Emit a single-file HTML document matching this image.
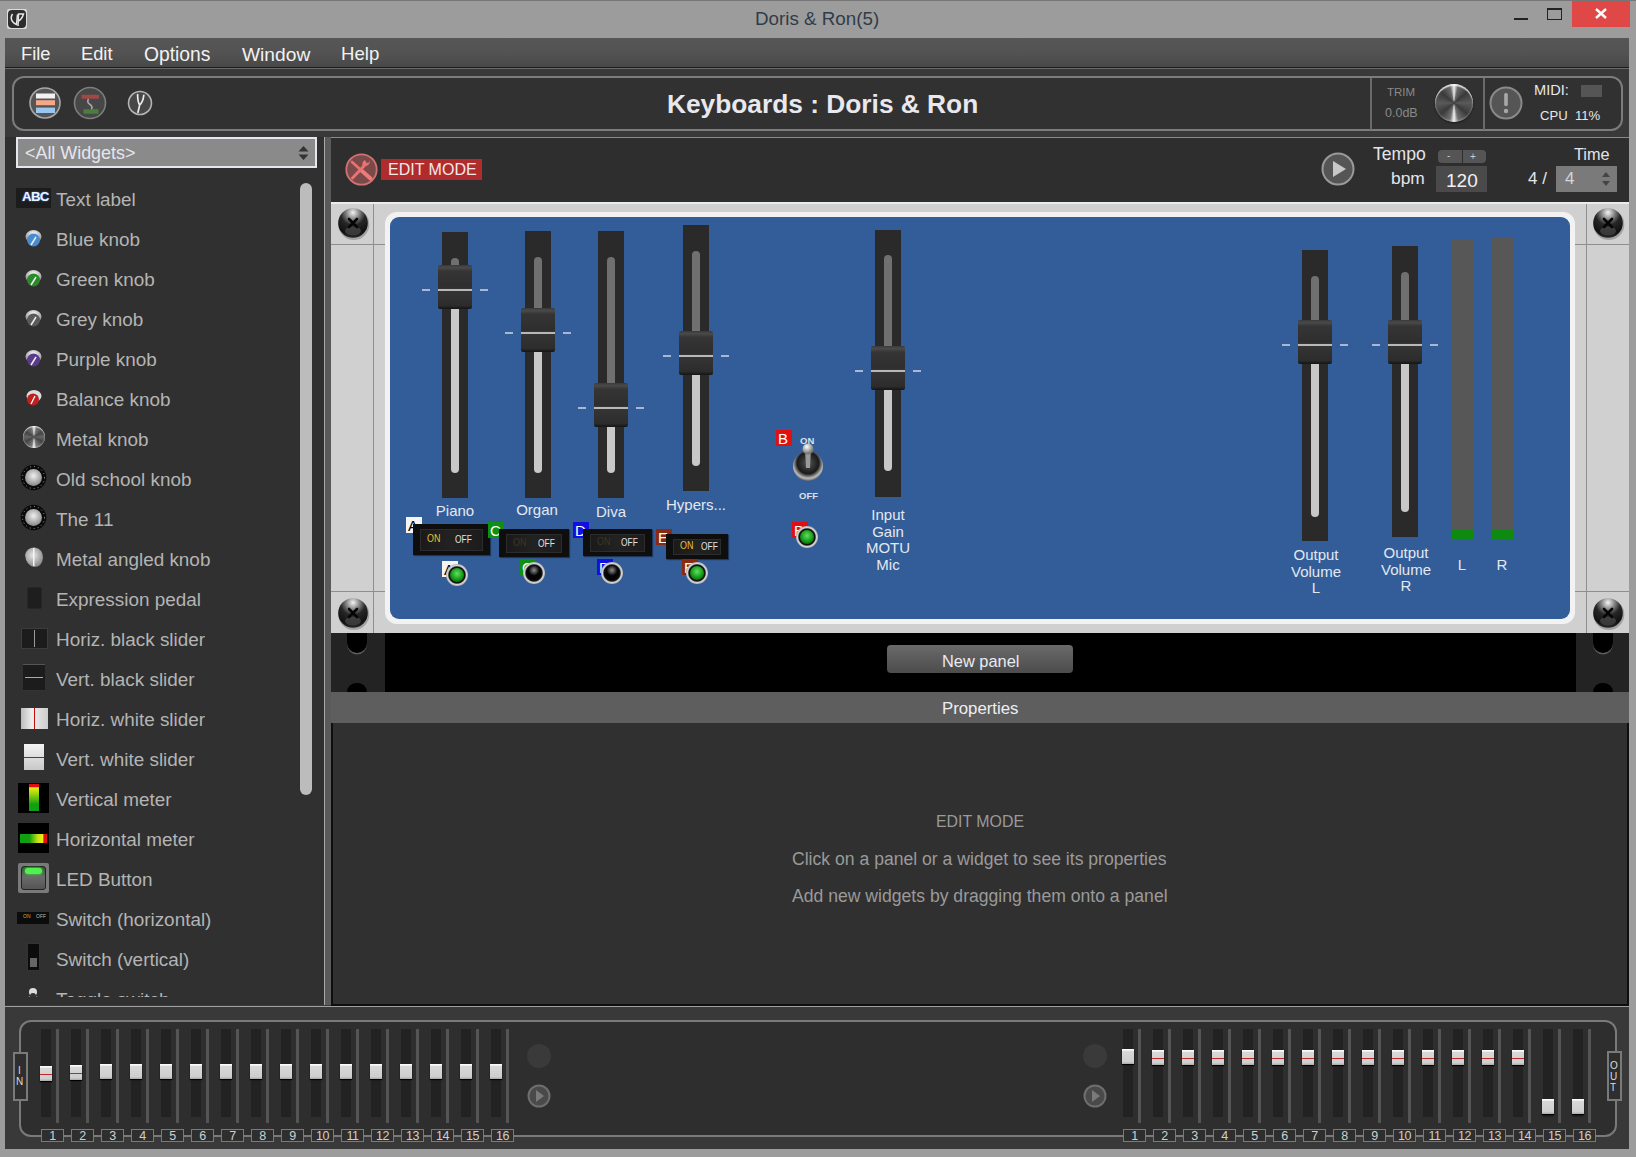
<!DOCTYPE html>
<html><head><meta charset="utf-8">
<style>
*{margin:0;padding:0;box-sizing:border-box}
html,body{width:1636px;height:1157px;overflow:hidden;background:#9c9c9c;font-family:"Liberation Sans",sans-serif}
.a{position:absolute}
.t{position:absolute;white-space:nowrap;line-height:1}
svg{position:absolute;overflow:visible}
</style></head><body>
<div class="a" style="left:0px;top:0px;width:1636px;height:1px;background:#767676"></div>
<div class="a" style="left:7px;top:9px;width:20px;height:20px;background:#dcdcdc;border-radius:2px"></div>
<div class="a" style="left:8px;top:10px;width:18px;height:18px;background:#2e2e2e;border-radius:4px"></div>
<svg style="left:8px;top:10px" width="18" height="18"><path d="M4.5 4 Q2 8 4.5 11.5 Q6.5 14 8.5 14.5 L9.5 4.5" stroke="#e8e8e8" stroke-width="1.5" fill="none"/><path d="M10 16 L10.5 4 L15.5 4 Q14 9 10.5 11" stroke="#e8e8e8" stroke-width="1.5" fill="none"/></svg>
<div class="t" style="left:755px;top:10px;font-size:18.8px;color:#303c48;">Doris &amp; Ron(5)</div>
<div class="a" style="left:1514px;top:18px;width:14px;height:2px;background:#222"></div>
<div class="a" style="left:1547px;top:8px;width:15px;height:12px;border:1px solid #222;border-top-width:2px"></div>
<div class="a" style="left:1572px;top:1px;width:58px;height:26px;background:#e04848"></div>
<svg style="left:1572px;top:1px" width="58" height="26"><path d="M24 8 L34 17 M34 8 L24 17" stroke="#fff" stroke-width="2.4"/></svg>
<div class="a" style="left:5px;top:38px;width:1624px;height:1111px;background:#2e2e2e"></div>
<div class="a" style="left:5px;top:38px;width:1624px;height:29px;background:linear-gradient(#565656,#535353 50%,#484848)"></div>
<div class="a" style="left:5px;top:67px;width:1624px;height:2px;background:#1c1c1c"></div>
<div class="t" style="left:21px;top:45px;font-size:18.3px;color:#f2f2f2;">File</div>
<div class="t" style="left:81px;top:45px;font-size:18.3px;color:#f2f2f2;">Edit</div>
<div class="t" style="left:144px;top:45px;font-size:19.3px;color:#f2f2f2;">Options</div>
<div class="t" style="left:242px;top:45px;font-size:19.2px;color:#f2f2f2;">Window</div>
<div class="t" style="left:341px;top:45px;font-size:18.6px;color:#f2f2f2;">Help</div>
<div class="a" style="left:5px;top:69px;width:1624px;height:68px;background:#393939"></div>
<div class="a" style="left:5px;top:68px;width:1624px;height:1px;background:#6a6a6a"></div>
<div class="a" style="left:12px;top:76px;width:1611px;height:55px;border:2px solid #7c7c7c;border-radius:12px;background:#313131"></div>
<div class="t" style="left:667px;top:91px;font-size:26.3px;color:#e8e8ee;font-weight:bold">Keyboards : Doris &amp; Ron</div>
<div class="a" style="left:1370px;top:78px;width:2px;height:52px;background:#6a6a6a"></div>
<div class="a" style="left:1483px;top:78px;width:2px;height:52px;background:#6a6a6a"></div>
<div class="t" style="left:1387px;top:87px;font-size:11.5px;color:#8a8a8a;">TRIM</div>
<div class="t" style="left:1385px;top:107px;font-size:12.5px;color:#8a8a8a;">0.0dB</div>
<div class="t" style="left:1534px;top:83px;font-size:14.6px;color:#e8e8e8;">MIDI:</div>
<div class="a" style="left:1581px;top:85px;width:21px;height:12px;background:#555"></div>
<div class="t" style="left:1540px;top:109px;font-size:13.1px;color:#e8e8e8;">CPU&nbsp;&nbsp;11%</div>
<div class="a" style="left:331px;top:137px;width:1298px;height:2px;background:#8a8a8a"></div>
<svg style="left:28px;top:86px" width="34" height="34"><circle cx="17" cy="17" r="15" fill="#555" stroke="#a8a8a8" stroke-width="1.6"/><rect x="8" y="7.5" width="19" height="5" fill="#f2f2f2"/><rect x="8" y="14.2" width="19" height="5" fill="#f4a888"/><rect x="8" y="21.6" width="19" height="5.4" fill="#98c8f0"/></svg>
<svg style="left:73px;top:86px" width="34" height="34"><circle cx="17" cy="17" r="15.5" fill="#474747" stroke="#7e7e7e" stroke-width="1.6"/><path d="M8.5 9 Q10 8.2 11.5 9 Q13 8.2 14.5 9 Q16 8.2 17.5 9 Q19 8.2 20.5 9 Q22 8.2 23.5 9 Q25 8.2 26 9 L26 12.5 Q24.5 13.3 23 12.5 Q21.5 13.3 20 12.5 Q18.5 13.3 17 12.5 Q15.5 13.3 14 12.5 Q12.5 13.3 11 12.5 Q9.5 13.3 8.5 12.5Z" fill="#a04848"/><path d="M15.5 13 Q13.5 16.5 17 18.5 Q20 20.5 18.5 23.5" stroke="#a8a8a8" stroke-width="1.6" fill="none"/><path d="M10.5 23.5 Q12 22.7 13.5 23.5 Q15 22.7 16.5 23.5 Q18 22.7 19.5 23.5 Q21 22.7 22.5 23.5 Q24 22.7 25.5 23.5 L25.5 27.5 Q24 28.3 22.5 27.5 Q21 28.3 19.5 27.5 Q18 28.3 16.5 27.5 Q15 28.3 13.5 27.5 Q12 28.3 10.5 27.5Z" fill="#4a7e3e"/></svg>
<svg style="left:126px;top:89px" width="28" height="28"><circle cx="14" cy="14" r="11.5" fill="#474747" stroke="#b4b4b4" stroke-width="1.6"/><path d="M11.6 5.5 Q11.6 13 13.7 15.9 Q17 13 17.8 6.4 M13.7 15.9 L12 23.3" stroke="#ececec" stroke-width="1.7" fill="none" stroke-linecap="round"/></svg>
<div class="a" style="left:1435px;top:84px;width:38px;height:38px;border-radius:50%;background:conic-gradient(#f0f0f0 0deg,#6a6a6a 14deg,#3a3a3a 50deg,#5a5a5a 90deg,#3a3a3a 130deg,#707070 166deg,#f4f4f4 180deg,#707070 194deg,#3a3a3a 230deg,#5a5a5a 270deg,#3a3a3a 310deg,#6a6a6a 346deg,#f0f0f0 360deg);box-shadow:inset 0 2px 1px rgba(255,255,255,.75),inset 0 -1px 2px rgba(255,255,255,.3),0 1px 2px rgba(0,0,0,.5)"></div>
<svg style="left:1489px;top:86px" width="34" height="34"><circle cx="17" cy="17" r="15.5" fill="#555" stroke="#8a8a8a" stroke-width="2"/><rect x="15.2" y="7" width="3.6" height="13" rx="1.5" fill="#a8a8a8"/><circle cx="17" cy="25" r="2.2" fill="#a8a8a8"/></svg>
<div class="a" style="left:6px;top:138px;width:318px;height:867px;background:#303030"></div>
<div class="a" style="left:324px;top:137px;width:7px;height:869px;background:#5a5a5a;border-left:1px solid #a8a8a8"></div>
<div class="a" style="left:16px;top:137px;width:301px;height:31px;border:2px solid #e6e6ee;background:#8a8a8a"></div>
<div class="t" style="left:25px;top:145px;font-size:17.9px;color:#e6e6ee;">&lt;All Widgets&gt;</div>
<svg style="left:298px;top:145px" width="12" height="16"><path d="M0.5 6.5 L5.5 1 L10.5 6.5Z M0.5 9.5 L5.5 15 L10.5 9.5Z" fill="#333"/></svg>
<div class="a" style="left:300px;top:183px;width:12px;height:612px;background:#bcbcbc;border-radius:6px"></div>
<div class="a" style="left:6px;top:138px;width:294px;height:859px;overflow:hidden">
<div class="t" style="left:50px;top:53px;font-size:18.9px;color:#b4b4b4;">Text label</div>
<div class="t" style="left:50px;top:93px;font-size:18.9px;color:#b4b4b4;">Blue knob</div>
<div class="t" style="left:50px;top:133px;font-size:18.9px;color:#b4b4b4;">Green knob</div>
<div class="t" style="left:50px;top:173px;font-size:18.9px;color:#b4b4b4;">Grey knob</div>
<div class="t" style="left:50px;top:213px;font-size:18.9px;color:#b4b4b4;">Purple knob</div>
<div class="t" style="left:50px;top:253px;font-size:18.9px;color:#b4b4b4;">Balance knob</div>
<div class="t" style="left:50px;top:293px;font-size:18.9px;color:#b4b4b4;">Metal knob</div>
<div class="t" style="left:50px;top:333px;font-size:18.9px;color:#b4b4b4;">Old school knob</div>
<div class="t" style="left:50px;top:373px;font-size:18.9px;color:#b4b4b4;">The 11</div>
<div class="t" style="left:50px;top:413px;font-size:18.9px;color:#b4b4b4;">Metal angled knob</div>
<div class="t" style="left:50px;top:453px;font-size:18.9px;color:#b4b4b4;">Expression pedal</div>
<div class="t" style="left:50px;top:493px;font-size:18.9px;color:#b4b4b4;">Horiz. black slider</div>
<div class="t" style="left:50px;top:533px;font-size:18.9px;color:#b4b4b4;">Vert. black slider</div>
<div class="t" style="left:50px;top:573px;font-size:18.9px;color:#b4b4b4;">Horiz. white slider</div>
<div class="t" style="left:50px;top:613px;font-size:18.9px;color:#b4b4b4;">Vert. white slider</div>
<div class="t" style="left:50px;top:653px;font-size:18.9px;color:#b4b4b4;">Vertical meter</div>
<div class="t" style="left:50px;top:693px;font-size:18.9px;color:#b4b4b4;">Horizontal meter</div>
<div class="t" style="left:50px;top:733px;font-size:18.9px;color:#b4b4b4;">LED Button</div>
<div class="t" style="left:50px;top:773px;font-size:18.9px;color:#b4b4b4;">Switch (horizontal)</div>
<div class="t" style="left:50px;top:813px;font-size:18.9px;color:#b4b4b4;">Switch (vertical)</div>
<div class="t" style="left:50px;top:853px;font-size:18.9px;color:#b4b4b4;">Toggle switch</div>
</div>
<div class="a" style="left:16px;top:188px;width:35px;height:20px;background:#1c1c1c"></div>
<div class="t" style="left:22px;top:190px;font-size:13.2px;color:#eef2ff;font-weight:bold;text-shadow:0 0 2px #3a70d0,0 0 1px #3a70d0;letter-spacing:-0.6px">ABC</div>
<svg style="left:24px;top:229px" width="20" height="20"><defs><radialGradient id="kg0" cx="50%" cy="30%" r="60%"><stop offset="0" stop-color="#fafafa"/><stop offset="1" stop-color="#9a9a9a"/></radialGradient></defs><ellipse cx="9.5" cy="7.5" rx="8" ry="6.5" fill="url(#kg0)"/><circle cx="9.5" cy="11" r="6.5" fill="#4a8ad0"/><path d="M7 16 L12 8" stroke="#eee" stroke-width="1.5"/></svg>
<svg style="left:24px;top:269px" width="20" height="20"><defs><radialGradient id="kg1" cx="50%" cy="30%" r="60%"><stop offset="0" stop-color="#fafafa"/><stop offset="1" stop-color="#9a9a9a"/></radialGradient></defs><ellipse cx="9.5" cy="7.5" rx="8" ry="6.5" fill="url(#kg1)"/><circle cx="9.5" cy="11" r="6.5" fill="#2a8a2a"/><path d="M7 16 L12 8" stroke="#eee" stroke-width="1.5"/></svg>
<svg style="left:24px;top:309px" width="20" height="20"><defs><radialGradient id="kg2" cx="50%" cy="30%" r="60%"><stop offset="0" stop-color="#fafafa"/><stop offset="1" stop-color="#9a9a9a"/></radialGradient></defs><ellipse cx="9.5" cy="7.5" rx="8" ry="6.5" fill="url(#kg2)"/><circle cx="9.5" cy="11" r="6.5" fill="#5a5a5a"/><path d="M7 16 L12 8" stroke="#eee" stroke-width="1.5"/></svg>
<svg style="left:24px;top:349px" width="20" height="20"><defs><radialGradient id="kg3" cx="50%" cy="30%" r="60%"><stop offset="0" stop-color="#fafafa"/><stop offset="1" stop-color="#9a9a9a"/></radialGradient></defs><ellipse cx="9.5" cy="7.5" rx="8" ry="6.5" fill="url(#kg3)"/><circle cx="9.5" cy="11" r="6.5" fill="#5a3a8a"/><path d="M7 16 L12 8" stroke="#eee" stroke-width="1.5"/></svg>
<svg style="left:24px;top:389px" width="20" height="20"><ellipse cx="10" cy="7" rx="7.5" ry="6" fill="#ddd"/><circle cx="9" cy="10.5" r="6" fill="#c02020"/><path d="M7 15 L11 7" stroke="#fff" stroke-width="1.3"/></svg>
<div class="a" style="left:23px;top:426px;width:22px;height:22px;border-radius:50%;background:conic-gradient(#f0f0f0 0deg,#777 15deg,#444 60deg,#666 90deg,#444 120deg,#777 165deg,#f4f4f4 180deg,#777 195deg,#444 240deg,#666 270deg,#444 300deg,#777 345deg,#f0f0f0 360deg);box-shadow:inset 0 1px 1px rgba(255,255,255,.8),inset 0 -1px 1px rgba(255,255,255,.4)"></div>
<svg style="left:20px;top:464px" width="27" height="27"><defs><radialGradient id="os" cx="50%" cy="40%" r="55%"><stop offset="0" stop-color="#f0f0f0"/><stop offset="1" stop-color="#909090"/></radialGradient></defs><circle cx="13.5" cy="13.5" r="12.8" fill="#0a0a0a"/><circle cx="13.5" cy="13.5" r="8.5" fill="url(#os)"/><circle cx="13.5" cy="13.5" r="11" fill="none" stroke="#bbb" stroke-width="0.8" stroke-dasharray="1 3"/></svg>
<svg style="left:20px;top:504px" width="27" height="27"><defs><radialGradient id="os" cx="50%" cy="40%" r="55%"><stop offset="0" stop-color="#f0f0f0"/><stop offset="1" stop-color="#909090"/></radialGradient></defs><circle cx="13.5" cy="13.5" r="12.8" fill="#0a0a0a"/><circle cx="13.5" cy="13.5" r="8.5" fill="url(#os)"/><circle cx="13.5" cy="13.5" r="11" fill="none" stroke="#bbb" stroke-width="0.8" stroke-dasharray="1 3"/></svg>
<svg style="left:22px;top:546px" width="24" height="24"><defs><radialGradient id="ma" cx="45%" cy="40%" r="60%"><stop offset="0" stop-color="#e8e8e8"/><stop offset="1" stop-color="#8a8a8a"/></radialGradient></defs><path d="M3 9 Q5 1 13 1.5 Q21 3 21 12 Q20 21 12 21 Q4 19 3 9Z" fill="url(#ma)"/><rect x="11" y="2" width="1.5" height="18" fill="#f4f4f4"/></svg>
<div class="a" style="left:27px;top:587px;width:15px;height:22px;background:#1e1e1e;border:1px solid #262626;border-radius:2px"></div>
<div class="a" style="left:21px;top:628px;width:27px;height:21px;background:#1c1c1c;border:1px solid #3c3c3c"></div>
<div class="a" style="left:34px;top:630px;width:1px;height:17px;background:#9a9a9a"></div>
<div class="a" style="left:23px;top:664px;width:22px;height:27px;background:#1c1c1c;border-top:1px solid #555;border-bottom:1px solid #333"></div>
<div class="a" style="left:25px;top:677px;width:18px;height:1px;background:#aaa"></div>
<div class="a" style="left:21px;top:708px;width:27px;height:21px;background:linear-gradient(90deg,#bbb,#eee 40%,#ccc)"></div>
<div class="a" style="left:34px;top:708px;width:1px;height:21px;background:#c01010"></div>
<div class="a" style="left:24px;top:744px;width:20px;height:26px;background:linear-gradient(#f4f4f4,#c8c8c8)"></div>
<div class="a" style="left:24px;top:757px;width:20px;height:1px;background:#c01010"></div>
<div class="a" style="left:18px;top:783px;width:31px;height:30px;background:#000"></div>
<div class="a" style="left:29px;top:784px;width:10px;height:27px;background:linear-gradient(#e01010 0,#e01010 10%,#e8f010 14%,#90d010 40%,#10a010 75%,#10a010 100%)"></div>
<div class="a" style="left:18px;top:823px;width:31px;height:30px;background:#000"></div>
<div class="a" style="left:20px;top:834px;width:27px;height:9px;background:linear-gradient(90deg,#10a010 0,#10a010 35%,#c0e010 65%,#f0f010 85%,#e01010 88%,#e01010 100%)"></div>
<div class="a" style="left:18px;top:863px;width:31px;height:30px;background:#7a7a7a;border-radius:2px"></div>
<div class="a" style="left:21px;top:866px;width:25px;height:24px;background:linear-gradient(#2a5a2a,#6a6a6a 45%,#555);border-radius:3px;border:1px solid #222"></div>
<div class="a" style="left:25px;top:868px;width:17px;height:6px;background:#50f050;border-radius:3px;box-shadow:0 0 3px #40ff40"></div>
<div class="a" style="left:17px;top:912px;width:32px;height:12px;background:#0c0c0c"></div>
<div class="t" style="left:23px;top:914px;font-size:5px;color:#d0b020;">ON</div>
<div class="t" style="left:36px;top:914px;font-size:5px;color:#bbb;">OFF</div>
<div class="a" style="left:27px;top:943px;width:13px;height:28px;background:#0c0c0c;border:1px solid #333"></div>
<div class="a" style="left:30px;top:958px;width:7px;height:9px;background:#666"></div>
<div class="a" style="left:20px;top:985px;width:30px;height:12px;overflow:hidden">
<svg style="left:4px;top:2px" width="20" height="20"><circle cx="9" cy="5" r="4" fill="#ddd"/><path d="M1 14 Q9 2 17 14Z" fill="#999"/><circle cx="9" cy="9" r="3" fill="#333"/></svg>
</div>
<div class="a" style="left:331px;top:138px;width:1298px;height:64px;background:#2e2e2e"></div>
<svg style="left:343px;top:151px" width="36" height="36"><circle cx="18.5" cy="18.5" r="15.2" fill="#7a4a4a" stroke="#d07272" stroke-width="1.8"/><path d="M9 11 L19 20" stroke="#ec7272" stroke-width="2.6" stroke-linecap="round"/><path d="M19 20 L27.5 27.5" stroke="#f07a7a" stroke-width="4" stroke-linecap="round"/><path d="M9.5 27 L21 15" stroke="#ec7272" stroke-width="3" stroke-linecap="round"/><path d="M20 16 Q18 11 22 9 L23.5 12 L26 11.5 L27 9 Q27.5 14 22 15.5Z" fill="#ec7272"/></svg>
<div class="a" style="left:381px;top:159px;width:101px;height:21px;background:#b02c2c"></div>
<div class="t" style="left:388px;top:162px;font-size:16px;color:#f4e8e8;">EDIT MODE</div>
<svg style="left:1320px;top:151px" width="36" height="36"><circle cx="18" cy="18" r="15.5" fill="#555" stroke="#9a9a9a" stroke-width="2"/><path d="M13 10 L26 18 L13 26Z" fill="#c8c8c8"/></svg>
<div class="t" style="left:1373px;top:146px;font-size:17.6px;color:#e4e4ec;">Tempo</div>
<div class="t" style="left:1391px;top:170px;font-size:17.4px;color:#e4e4ec;">bpm</div>
<div class="a" style="left:1438px;top:150px;width:24px;height:13px;background:#555;border-radius:4px 0 0 4px"></div>
<div class="a" style="left:1463px;top:150px;width:23px;height:13px;background:#555;border-radius:0 4px 4px 0"></div>
<div class="t" style="left:1447px;top:151px;font-size:10px;color:#ccc;">-</div>
<div class="t" style="left:1470px;top:152px;font-size:10px;color:#ccc;">+</div>
<div class="a" style="left:1436px;top:166px;width:51px;height:26px;background:#4a4a4a"></div>
<div class="t" style="left:1446px;top:171px;font-size:19px;color:#f0f0f4;">120</div>
<div class="t" style="left:1574px;top:146px;font-size:16.3px;color:#e4e4ec;">Time</div>
<div class="t" style="left:1528px;top:170px;font-size:17px;color:#e4e4ec;">4 /</div>
<div class="a" style="left:1556px;top:166px;width:61px;height:26px;background:#7a7a7a"></div>
<div class="t" style="left:1565px;top:170px;font-size:17px;color:#d4d4dc;">4</div>
<svg style="left:1600px;top:170px" width="12" height="18"><path d="M2 7 L6 2 L10 7Z M2 11 L6 16 L10 11Z" fill="#444"/></svg>
<div class="a" style="left:331px;top:202px;width:1298px;height:431px;background:#d0d0d0"></div>
<div class="a" style="left:331px;top:202px;width:1298px;height:2px;background:#ececec"></div>
<div class="a" style="left:373px;top:204px;width:1px;height:429px;background:#8e8e8e"></div>
<div class="a" style="left:1586px;top:204px;width:1px;height:429px;background:#8e8e8e"></div>
<div class="a" style="left:331px;top:244px;width:54px;height:1px;background:#8e8e8e"></div>
<div class="a" style="left:331px;top:591px;width:54px;height:1px;background:#8e8e8e"></div>
<div class="a" style="left:1575px;top:244px;width:54px;height:1px;background:#8e8e8e"></div>
<div class="a" style="left:1575px;top:591px;width:54px;height:1px;background:#8e8e8e"></div>
<div class="a" style="left:385px;top:212px;width:1190px;height:412px;background:#f2f2f2;border-radius:12px"></div>
<div class="a" style="left:390px;top:217px;width:1180px;height:402px;background:#325d98;border-radius:9px"></div>
<svg style="left:335px;top:205px" width="36" height="36"><defs><radialGradient id="sc353223" cx="50%" cy="15%" r="85%"><stop offset="0" stop-color="#f4f4f4"/><stop offset="0.25" stop-color="#8a8a8a"/><stop offset="0.5" stop-color="#262626"/><stop offset="0.85" stop-color="#111"/><stop offset="1" stop-color="#2a2a2a"/></radialGradient></defs><circle cx="18.8" cy="19.5" r="15.5" fill="#000" opacity="0.22"/><circle cx="18" cy="18" r="14.8" fill="url(#sc353223)"/><ellipse cx="18" cy="26" rx="8" ry="4.5" fill="#5a5a5a" opacity="0.55"/><path d="M14 14 L22 22 M22 14 L14 22" stroke="#050505" stroke-width="2.6" stroke-linecap="round"/></svg>
<svg style="left:1590px;top:205px" width="36" height="36"><defs><radialGradient id="sc1608223" cx="50%" cy="15%" r="85%"><stop offset="0" stop-color="#f4f4f4"/><stop offset="0.25" stop-color="#8a8a8a"/><stop offset="0.5" stop-color="#262626"/><stop offset="0.85" stop-color="#111"/><stop offset="1" stop-color="#2a2a2a"/></radialGradient></defs><circle cx="18.8" cy="19.5" r="15.5" fill="#000" opacity="0.22"/><circle cx="18" cy="18" r="14.8" fill="url(#sc1608223)"/><ellipse cx="18" cy="26" rx="8" ry="4.5" fill="#5a5a5a" opacity="0.55"/><path d="M14 14 L22 22 M22 14 L14 22" stroke="#050505" stroke-width="2.6" stroke-linecap="round"/></svg>
<svg style="left:335px;top:595px" width="36" height="36"><defs><radialGradient id="sc353613" cx="50%" cy="15%" r="85%"><stop offset="0" stop-color="#f4f4f4"/><stop offset="0.25" stop-color="#8a8a8a"/><stop offset="0.5" stop-color="#262626"/><stop offset="0.85" stop-color="#111"/><stop offset="1" stop-color="#2a2a2a"/></radialGradient></defs><circle cx="18.8" cy="19.5" r="15.5" fill="#000" opacity="0.22"/><circle cx="18" cy="18" r="14.8" fill="url(#sc353613)"/><ellipse cx="18" cy="26" rx="8" ry="4.5" fill="#5a5a5a" opacity="0.55"/><path d="M14 14 L22 22 M22 14 L14 22" stroke="#050505" stroke-width="2.6" stroke-linecap="round"/></svg>
<svg style="left:1590px;top:595px" width="36" height="36"><defs><radialGradient id="sc1608613" cx="50%" cy="15%" r="85%"><stop offset="0" stop-color="#f4f4f4"/><stop offset="0.25" stop-color="#8a8a8a"/><stop offset="0.5" stop-color="#262626"/><stop offset="0.85" stop-color="#111"/><stop offset="1" stop-color="#2a2a2a"/></radialGradient></defs><circle cx="18.8" cy="19.5" r="15.5" fill="#000" opacity="0.22"/><circle cx="18" cy="18" r="14.8" fill="url(#sc1608613)"/><ellipse cx="18" cy="26" rx="8" ry="4.5" fill="#5a5a5a" opacity="0.55"/><path d="M14 14 L22 22 M22 14 L14 22" stroke="#050505" stroke-width="2.6" stroke-linecap="round"/></svg>
<div class="a" style="left:442px;top:232px;width:26px;height:266px;background:#2a2a2a"></div>
<div class="a" style="left:451px;top:258px;width:8px;height:11px;background:#707070;border-radius:4px 4px 0 0"></div>
<div class="a" style="left:451px;top:305px;width:8px;height:168px;background:#c8c8c8;border-radius:0 0 4px 4px"></div>
<div class="a" style="left:438px;top:265px;width:34px;height:44px;background:linear-gradient(#3a3a3a 0,#4a4a4a 6%,#353535 14%,#2e2e2e 50%,#363636 54%,#2c2c2c 92%,#141414 100%);border-radius:2px"></div>
<div class="a" style="left:438px;top:289px;width:34px;height:2px;background:#b8b8b8"></div>
<div class="a" style="left:422px;top:289px;width:8px;height:2px;background:#a8b8d0"></div>
<div class="a" style="left:480px;top:289px;width:8px;height:2px;background:#a8b8d0"></div>
<div class="a" style="left:525px;top:231px;width:26px;height:267px;background:#2a2a2a"></div>
<div class="a" style="left:534px;top:257px;width:8px;height:55px;background:#707070;border-radius:4px 4px 0 0"></div>
<div class="a" style="left:534px;top:348px;width:8px;height:125px;background:#c8c8c8;border-radius:0 0 4px 4px"></div>
<div class="a" style="left:521px;top:308px;width:34px;height:44px;background:linear-gradient(#3a3a3a 0,#4a4a4a 6%,#353535 14%,#2e2e2e 50%,#363636 54%,#2c2c2c 92%,#141414 100%);border-radius:2px"></div>
<div class="a" style="left:521px;top:332px;width:34px;height:2px;background:#b8b8b8"></div>
<div class="a" style="left:505px;top:332px;width:8px;height:2px;background:#a8b8d0"></div>
<div class="a" style="left:563px;top:332px;width:8px;height:2px;background:#a8b8d0"></div>
<div class="a" style="left:598px;top:231px;width:26px;height:267px;background:#2a2a2a"></div>
<div class="a" style="left:607px;top:257px;width:8px;height:130px;background:#707070;border-radius:4px 4px 0 0"></div>
<div class="a" style="left:607px;top:423px;width:8px;height:50px;background:#c8c8c8;border-radius:0 0 4px 4px"></div>
<div class="a" style="left:594px;top:383px;width:34px;height:44px;background:linear-gradient(#3a3a3a 0,#4a4a4a 6%,#353535 14%,#2e2e2e 50%,#363636 54%,#2c2c2c 92%,#141414 100%);border-radius:2px"></div>
<div class="a" style="left:594px;top:407px;width:34px;height:2px;background:#b8b8b8"></div>
<div class="a" style="left:578px;top:407px;width:8px;height:2px;background:#a8b8d0"></div>
<div class="a" style="left:636px;top:407px;width:8px;height:2px;background:#a8b8d0"></div>
<div class="a" style="left:683px;top:225px;width:26px;height:266px;background:#2a2a2a"></div>
<div class="a" style="left:692px;top:251px;width:8px;height:84px;background:#707070;border-radius:4px 4px 0 0"></div>
<div class="a" style="left:692px;top:371px;width:8px;height:95px;background:#c8c8c8;border-radius:0 0 4px 4px"></div>
<div class="a" style="left:679px;top:331px;width:34px;height:44px;background:linear-gradient(#3a3a3a 0,#4a4a4a 6%,#353535 14%,#2e2e2e 50%,#363636 54%,#2c2c2c 92%,#141414 100%);border-radius:2px"></div>
<div class="a" style="left:679px;top:355px;width:34px;height:2px;background:#b8b8b8"></div>
<div class="a" style="left:663px;top:355px;width:8px;height:2px;background:#a8b8d0"></div>
<div class="a" style="left:721px;top:355px;width:8px;height:2px;background:#a8b8d0"></div>
<div class="a" style="left:875px;top:230px;width:26px;height:267px;background:#2a2a2a"></div>
<div class="a" style="left:884px;top:255px;width:8px;height:95px;background:#707070;border-radius:4px 4px 0 0"></div>
<div class="a" style="left:884px;top:386px;width:8px;height:85px;background:#c8c8c8;border-radius:0 0 4px 4px"></div>
<div class="a" style="left:871px;top:346px;width:34px;height:44px;background:linear-gradient(#3a3a3a 0,#4a4a4a 6%,#353535 14%,#2e2e2e 50%,#363636 54%,#2c2c2c 92%,#141414 100%);border-radius:2px"></div>
<div class="a" style="left:871px;top:370px;width:34px;height:2px;background:#b8b8b8"></div>
<div class="a" style="left:855px;top:370px;width:8px;height:2px;background:#a8b8d0"></div>
<div class="a" style="left:913px;top:370px;width:8px;height:2px;background:#a8b8d0"></div>
<div class="a" style="left:1302px;top:250px;width:26px;height:291px;background:#2a2a2a"></div>
<div class="a" style="left:1311px;top:276px;width:8px;height:48px;background:#707070;border-radius:4px 4px 0 0"></div>
<div class="a" style="left:1311px;top:360px;width:8px;height:157px;background:#c8c8c8;border-radius:0 0 4px 4px"></div>
<div class="a" style="left:1298px;top:320px;width:34px;height:44px;background:linear-gradient(#3a3a3a 0,#4a4a4a 6%,#353535 14%,#2e2e2e 50%,#363636 54%,#2c2c2c 92%,#141414 100%);border-radius:2px"></div>
<div class="a" style="left:1298px;top:344px;width:34px;height:2px;background:#b8b8b8"></div>
<div class="a" style="left:1282px;top:344px;width:8px;height:2px;background:#a8b8d0"></div>
<div class="a" style="left:1340px;top:344px;width:8px;height:2px;background:#a8b8d0"></div>
<div class="a" style="left:1392px;top:246px;width:26px;height:291px;background:#2a2a2a"></div>
<div class="a" style="left:1401px;top:272px;width:8px;height:52px;background:#707070;border-radius:4px 4px 0 0"></div>
<div class="a" style="left:1401px;top:360px;width:8px;height:152px;background:#c8c8c8;border-radius:0 0 4px 4px"></div>
<div class="a" style="left:1388px;top:320px;width:34px;height:44px;background:linear-gradient(#3a3a3a 0,#4a4a4a 6%,#353535 14%,#2e2e2e 50%,#363636 54%,#2c2c2c 92%,#141414 100%);border-radius:2px"></div>
<div class="a" style="left:1388px;top:344px;width:34px;height:2px;background:#b8b8b8"></div>
<div class="a" style="left:1372px;top:344px;width:8px;height:2px;background:#a8b8d0"></div>
<div class="a" style="left:1430px;top:344px;width:8px;height:2px;background:#a8b8d0"></div>
<div class="t" style="left:255px;width:400px;text-align:center;top:503px;font-size:15px;color:#e4e8f0;">Piano</div>
<div class="t" style="left:337px;width:400px;text-align:center;top:502px;font-size:15px;color:#e4e8f0;">Organ</div>
<div class="t" style="left:411px;width:400px;text-align:center;top:504px;font-size:15px;color:#e4e8f0;">Diva</div>
<div class="t" style="left:496px;width:400px;text-align:center;top:497px;font-size:15px;color:#e4e8f0;">Hypers...</div>
<div class="t" style="left:688px;width:400px;text-align:center;top:507.0px;font-size:15px;color:#e4e8f0;">Input</div>
<div class="t" style="left:688px;width:400px;text-align:center;top:523.5px;font-size:15px;color:#e4e8f0;">Gain</div>
<div class="t" style="left:688px;width:400px;text-align:center;top:540.0px;font-size:15px;color:#e4e8f0;">MOTU</div>
<div class="t" style="left:688px;width:400px;text-align:center;top:556.5px;font-size:15px;color:#e4e8f0;">Mic</div>
<div class="t" style="left:1116px;width:400px;text-align:center;top:547.0px;font-size:15px;color:#e4e8f0;">Output</div>
<div class="t" style="left:1116px;width:400px;text-align:center;top:563.5px;font-size:15px;color:#e4e8f0;">Volume</div>
<div class="t" style="left:1116px;width:400px;text-align:center;top:580.0px;font-size:15px;color:#e4e8f0;">L</div>
<div class="t" style="left:1206px;width:400px;text-align:center;top:545.0px;font-size:15px;color:#e4e8f0;">Output</div>
<div class="t" style="left:1206px;width:400px;text-align:center;top:561.5px;font-size:15px;color:#e4e8f0;">Volume</div>
<div class="t" style="left:1206px;width:400px;text-align:center;top:578.0px;font-size:15px;color:#e4e8f0;">R</div>
<div class="t" style="left:1262px;width:400px;text-align:center;top:557px;font-size:15px;color:#e4e8f0;">L</div>
<div class="t" style="left:1302px;width:400px;text-align:center;top:557px;font-size:15px;color:#e4e8f0;">R</div>
<div class="a" style="left:1452px;top:239px;width:21px;height:301px;background:#575757"></div>
<div class="a" style="left:1452px;top:529px;width:21px;height:11px;background:#0e8a10"></div>
<div class="a" style="left:1492px;top:237px;width:21px;height:303px;background:#575757"></div>
<div class="a" style="left:1492px;top:529px;width:21px;height:11px;background:#0e8a10"></div>
<div class="a" style="left:406px;top:517px;width:16px;height:16px;background:#f4f4f4"></div>
<div class="t" style="left:408px;top:518px;font-size:15px;color:#000;">A</div>
<div class="a" style="left:413px;top:524px;width:77px;height:31px;background:#0e0e0e;box-shadow:1px 1px 1px rgba(0,0,0,.4)"></div>
<div class="a" style="left:420px;top:529px;width:63px;height:22px;background:linear-gradient(90deg,#1a1a1a,#222 50%,#1c1c1c);border:1px solid #2c2c2c"></div>
<div class="t" style="left:427px;top:533px;font-size:10.5px;color:#e8c030;transform:scaleX(0.85);transform-origin:left">ON</div>
<div class="t" style="left:455px;top:534px;font-size:10.5px;color:#e0e0e0;transform:scaleX(0.8);transform-origin:left">OFF</div>
<div class="a" style="left:442px;top:561px;width:16px;height:16px;background:#f4f4f4"></div>
<div class="t" style="left:444px;top:562px;font-size:15px;color:#000;">A</div>
<div class="a" style="left:446px;top:564px;width:22px;height:22px;border-radius:50%;background:radial-gradient(circle,#111 52%,#d8d8d8 60%,#a0a0a0 75%,#666 90%,#333 100%)"></div>
<div class="a" style="left:450px;top:568px;width:14px;height:14px;border-radius:50%;background:radial-gradient(circle at 50% 40%,#60e060,#109010 60%,#064006)"></div>
<div class="a" style="left:488px;top:522px;width:16px;height:16px;background:#109010"></div>
<div class="t" style="left:490px;top:523px;font-size:15px;color:#fff;">C</div>
<div class="a" style="left:499px;top:529px;width:70px;height:28px;background:#0e0e0e;box-shadow:1px 1px 1px rgba(0,0,0,.4)"></div>
<div class="a" style="left:506px;top:534px;width:56px;height:19px;background:linear-gradient(90deg,#1a1a1a,#222 50%,#1c1c1c);border:1px solid #2c2c2c"></div>
<div class="t" style="left:513px;top:537px;font-size:10.5px;color:#3e3620;transform:scaleX(0.85);transform-origin:left">ON</div>
<div class="t" style="left:538px;top:538px;font-size:10.5px;color:#e0e0e0;transform:scaleX(0.8);transform-origin:left">OFF</div>
<div class="a" style="left:520px;top:559px;width:16px;height:16px;background:#109010"></div>
<div class="t" style="left:522px;top:560px;font-size:15px;color:#fff;">C</div>
<div class="a" style="left:523px;top:562px;width:22px;height:22px;border-radius:50%;background:radial-gradient(circle,#111 52%,#d8d8d8 60%,#a0a0a0 75%,#666 90%,#333 100%)"></div>
<div class="a" style="left:527px;top:566px;width:14px;height:14px;border-radius:50%;background:radial-gradient(circle at 50% 30%,#909090,#050505 45%,#000)"></div>
<div class="a" style="left:573px;top:522px;width:16px;height:16px;background:#1010e0"></div>
<div class="t" style="left:575px;top:523px;font-size:15px;color:#fff;">D</div>
<div class="a" style="left:583px;top:529px;width:69px;height:27px;background:#0e0e0e;box-shadow:1px 1px 1px rgba(0,0,0,.4)"></div>
<div class="a" style="left:590px;top:534px;width:55px;height:18px;background:linear-gradient(90deg,#1a1a1a,#222 50%,#1c1c1c);border:1px solid #2c2c2c"></div>
<div class="t" style="left:597px;top:536px;font-size:10.5px;color:#3e3620;transform:scaleX(0.85);transform-origin:left">ON</div>
<div class="t" style="left:621px;top:537px;font-size:10.5px;color:#e0e0e0;transform:scaleX(0.8);transform-origin:left">OFF</div>
<div class="a" style="left:597px;top:559px;width:16px;height:16px;background:#1010e0"></div>
<div class="t" style="left:599px;top:560px;font-size:15px;color:#fff;">D</div>
<div class="a" style="left:601px;top:562px;width:22px;height:22px;border-radius:50%;background:radial-gradient(circle,#111 52%,#d8d8d8 60%,#a0a0a0 75%,#666 90%,#333 100%)"></div>
<div class="a" style="left:605px;top:566px;width:14px;height:14px;border-radius:50%;background:radial-gradient(circle at 50% 30%,#909090,#050505 45%,#000)"></div>
<div class="a" style="left:656px;top:529px;width:16px;height:16px;background:#8a2a10"></div>
<div class="t" style="left:658px;top:530px;font-size:15px;color:#fff;">E</div>
<div class="a" style="left:666px;top:534px;width:62px;height:25px;background:#0e0e0e;box-shadow:1px 1px 1px rgba(0,0,0,.4)"></div>
<div class="a" style="left:673px;top:539px;width:48px;height:16px;background:linear-gradient(90deg,#1a1a1a,#222 50%,#1c1c1c);border:1px solid #2c2c2c"></div>
<div class="t" style="left:680px;top:540px;font-size:10.5px;color:#e8c030;transform:scaleX(0.85);transform-origin:left">ON</div>
<div class="t" style="left:701px;top:541px;font-size:10.5px;color:#e0e0e0;transform:scaleX(0.8);transform-origin:left">OFF</div>
<div class="a" style="left:682px;top:559px;width:16px;height:16px;background:#8a2a10"></div>
<div class="t" style="left:684px;top:560px;font-size:15px;color:#fff;">E</div>
<div class="a" style="left:686px;top:562px;width:22px;height:22px;border-radius:50%;background:radial-gradient(circle,#111 52%,#d8d8d8 60%,#a0a0a0 75%,#666 90%,#333 100%)"></div>
<div class="a" style="left:690px;top:566px;width:14px;height:14px;border-radius:50%;background:radial-gradient(circle at 50% 40%,#60e060,#109010 60%,#064006)"></div>
<div class="a" style="left:776px;top:430px;width:16px;height:16px;background:#e01010"></div>
<div class="t" style="left:778px;top:431px;font-size:15px;color:#fff;">B</div>
<div class="t" style="left:800px;top:436px;font-size:9.5px;color:#d8e0e8;font-weight:bold">ON</div>
<div class="t" style="left:799px;top:491px;font-size:9.5px;color:#d8e0e8;font-weight:bold">OFF</div>
<svg style="left:790px;top:440px" width="36" height="44"><defs><radialGradient id="tg" cx="50%" cy="40%" r="60%"><stop offset="0" stop-color="#555"/><stop offset="0.6" stop-color="#1a1a1a"/><stop offset="0.85" stop-color="#bbb"/><stop offset="1" stop-color="#666"/></radialGradient><radialGradient id="tb" cx="40%" cy="30%" r="60%"><stop offset="0" stop-color="#fff"/><stop offset="1" stop-color="#777"/></radialGradient></defs><circle cx="18" cy="26" r="15" fill="url(#tg)"/><path d="M15 8 L21 8 L20 28 L16 28Z" fill="#9a9a9a"/><circle cx="18" cy="9" r="5.5" fill="url(#tb)"/></svg>
<div class="a" style="left:792px;top:522px;width:16px;height:16px;background:#e01010"></div>
<div class="t" style="left:794px;top:523px;font-size:15px;color:#fff;">B</div>
<div class="a" style="left:796px;top:526px;width:22px;height:22px;border-radius:50%;background:radial-gradient(circle,#111 52%,#d8d8d8 60%,#a0a0a0 75%,#666 90%,#333 100%)"></div>
<div class="a" style="left:800px;top:530px;width:14px;height:14px;border-radius:50%;background:radial-gradient(circle at 50% 40%,#60e060,#109010 60%,#064006)"></div>
<div class="a" style="left:331px;top:633px;width:1298px;height:59px;background:#000"></div>
<div class="a" style="left:331px;top:633px;width:54px;height:59px;background:#232323"></div>
<div class="a" style="left:1576px;top:633px;width:53px;height:59px;background:#232323"></div>
<div class="a" style="left:347px;top:633px;width:20px;height:20px;border-radius:0 0 10px 10px;background:#000;box-shadow:0 1.5px 0 #5c5c5c"></div>
<div class="a" style="left:347px;top:683px;width:20px;height:9px;border-radius:10px 10px 0 0;background:#000"></div>
<div class="a" style="left:1593px;top:633px;width:20px;height:20px;border-radius:0 0 10px 10px;background:#000;box-shadow:0 1.5px 0 #5c5c5c"></div>
<div class="a" style="left:1593px;top:683px;width:20px;height:9px;border-radius:10px 10px 0 0;background:#000"></div>
<div class="a" style="left:887px;top:645px;width:186px;height:28px;border-radius:4px;background:linear-gradient(#6a6a6a,#4c4c4c)"></div>
<div class="t" style="left:942px;top:653px;font-size:16.4px;color:#eaeaf0;">New panel</div>
<div class="a" style="left:331px;top:692px;width:1298px;height:31px;background:#5e5e5e"></div>
<div class="t" style="left:942px;top:701px;font-size:16.8px;color:#eeeef2;">Properties</div>
<div class="a" style="left:331px;top:723px;width:1298px;height:282px;background:#303030"></div>
<div class="a" style="left:331px;top:723px;width:2px;height:283px;background:#0e0e0e"></div>
<div class="a" style="left:1627px;top:723px;width:2px;height:283px;background:#0e0e0e"></div>
<div class="t" style="left:936px;top:814px;font-size:15.9px;color:#9a9a9a;">EDIT MODE</div>
<div class="t" style="left:792px;top:851px;font-size:17.6px;color:#9a9a9a;">Click on a panel or a widget to see its properties</div>
<div class="t" style="left:792px;top:888px;font-size:17.6px;color:#9a9a9a;">Add new widgets by dragging them onto a panel</div>
<div class="a" style="left:5px;top:1005px;width:1624px;height:144px;background:#393939"></div>
<div class="a" style="left:5px;top:1006px;width:1624px;height:1px;background:#a0a0a0"></div>
<div class="a" style="left:331px;top:1004px;width:1298px;height:2px;background:#0e0e0e"></div>
<div class="a" style="left:19px;top:1020px;width:1598px;height:117px;border:2px solid #7a7a7a;border-radius:12px;background:#2e2e2e"></div>
<div class="a" style="left:41px;top:1029px;width:10px;height:88px;background:#222"></div>
<div class="a" style="left:56px;top:1029px;width:3px;height:94px;background:#555"></div>
<div class="a" style="left:40px;top:1066px;width:12px;height:15px;background:linear-gradient(#fafafa 0,#fafafa 8%,#d8d8d8 14%,#cfcfcf 85%,#a8a8a8 100%);box-shadow:0 1px 1px #000"></div>
<div class="a" style="left:40px;top:1074px;width:12px;height:1px;background:#c02828"></div>
<div class="a" style="left:41px;top:1129px;width:23px;height:13px;background:#2e2e2e;border:1.5px solid #7a7a7a"></div>
<div class="t" style="left:41px;width:23px;text-align:center;top:1130px;font-size:12.5px;color:#cfcfcf;letter-spacing:-0.5px">1</div>
<div class="a" style="left:71px;top:1029px;width:10px;height:88px;background:#222"></div>
<div class="a" style="left:86px;top:1029px;width:3px;height:94px;background:#555"></div>
<div class="a" style="left:70px;top:1065px;width:12px;height:15px;background:linear-gradient(#fafafa 0,#fafafa 8%,#d8d8d8 14%,#cfcfcf 85%,#a8a8a8 100%);box-shadow:0 1px 1px #000"></div>
<div class="a" style="left:70px;top:1073px;width:12px;height:1px;background:#c02828"></div>
<div class="a" style="left:71px;top:1129px;width:23px;height:13px;background:#2e2e2e;border:1.5px solid #7a7a7a"></div>
<div class="t" style="left:71px;width:23px;text-align:center;top:1130px;font-size:12.5px;color:#cfcfcf;letter-spacing:-0.5px">2</div>
<div class="a" style="left:101px;top:1029px;width:10px;height:88px;background:#222"></div>
<div class="a" style="left:116px;top:1029px;width:3px;height:94px;background:#555"></div>
<div class="a" style="left:100px;top:1064px;width:12px;height:15px;background:linear-gradient(#fafafa 0,#fafafa 8%,#d8d8d8 14%,#cfcfcf 85%,#a8a8a8 100%);box-shadow:0 1px 1px #000"></div>
<div class="a" style="left:101px;top:1129px;width:23px;height:13px;background:#2e2e2e;border:1.5px solid #7a7a7a"></div>
<div class="t" style="left:101px;width:23px;text-align:center;top:1130px;font-size:12.5px;color:#cfcfcf;letter-spacing:-0.5px">3</div>
<div class="a" style="left:131px;top:1029px;width:10px;height:88px;background:#222"></div>
<div class="a" style="left:146px;top:1029px;width:3px;height:94px;background:#555"></div>
<div class="a" style="left:130px;top:1064px;width:12px;height:15px;background:linear-gradient(#fafafa 0,#fafafa 8%,#d8d8d8 14%,#cfcfcf 85%,#a8a8a8 100%);box-shadow:0 1px 1px #000"></div>
<div class="a" style="left:131px;top:1129px;width:23px;height:13px;background:#2e2e2e;border:1.5px solid #7a7a7a"></div>
<div class="t" style="left:131px;width:23px;text-align:center;top:1130px;font-size:12.5px;color:#cfcfcf;letter-spacing:-0.5px">4</div>
<div class="a" style="left:161px;top:1029px;width:10px;height:88px;background:#222"></div>
<div class="a" style="left:176px;top:1029px;width:3px;height:94px;background:#555"></div>
<div class="a" style="left:160px;top:1064px;width:12px;height:15px;background:linear-gradient(#fafafa 0,#fafafa 8%,#d8d8d8 14%,#cfcfcf 85%,#a8a8a8 100%);box-shadow:0 1px 1px #000"></div>
<div class="a" style="left:161px;top:1129px;width:23px;height:13px;background:#2e2e2e;border:1.5px solid #7a7a7a"></div>
<div class="t" style="left:161px;width:23px;text-align:center;top:1130px;font-size:12.5px;color:#cfcfcf;letter-spacing:-0.5px">5</div>
<div class="a" style="left:191px;top:1029px;width:10px;height:88px;background:#222"></div>
<div class="a" style="left:206px;top:1029px;width:3px;height:94px;background:#555"></div>
<div class="a" style="left:190px;top:1064px;width:12px;height:15px;background:linear-gradient(#fafafa 0,#fafafa 8%,#d8d8d8 14%,#cfcfcf 85%,#a8a8a8 100%);box-shadow:0 1px 1px #000"></div>
<div class="a" style="left:191px;top:1129px;width:23px;height:13px;background:#2e2e2e;border:1.5px solid #7a7a7a"></div>
<div class="t" style="left:191px;width:23px;text-align:center;top:1130px;font-size:12.5px;color:#cfcfcf;letter-spacing:-0.5px">6</div>
<div class="a" style="left:221px;top:1029px;width:10px;height:88px;background:#222"></div>
<div class="a" style="left:236px;top:1029px;width:3px;height:94px;background:#555"></div>
<div class="a" style="left:220px;top:1064px;width:12px;height:15px;background:linear-gradient(#fafafa 0,#fafafa 8%,#d8d8d8 14%,#cfcfcf 85%,#a8a8a8 100%);box-shadow:0 1px 1px #000"></div>
<div class="a" style="left:221px;top:1129px;width:23px;height:13px;background:#2e2e2e;border:1.5px solid #7a7a7a"></div>
<div class="t" style="left:221px;width:23px;text-align:center;top:1130px;font-size:12.5px;color:#cfcfcf;letter-spacing:-0.5px">7</div>
<div class="a" style="left:251px;top:1029px;width:10px;height:88px;background:#222"></div>
<div class="a" style="left:266px;top:1029px;width:3px;height:94px;background:#555"></div>
<div class="a" style="left:250px;top:1064px;width:12px;height:15px;background:linear-gradient(#fafafa 0,#fafafa 8%,#d8d8d8 14%,#cfcfcf 85%,#a8a8a8 100%);box-shadow:0 1px 1px #000"></div>
<div class="a" style="left:251px;top:1129px;width:23px;height:13px;background:#2e2e2e;border:1.5px solid #7a7a7a"></div>
<div class="t" style="left:251px;width:23px;text-align:center;top:1130px;font-size:12.5px;color:#cfcfcf;letter-spacing:-0.5px">8</div>
<div class="a" style="left:281px;top:1029px;width:10px;height:88px;background:#222"></div>
<div class="a" style="left:296px;top:1029px;width:3px;height:94px;background:#555"></div>
<div class="a" style="left:280px;top:1064px;width:12px;height:15px;background:linear-gradient(#fafafa 0,#fafafa 8%,#d8d8d8 14%,#cfcfcf 85%,#a8a8a8 100%);box-shadow:0 1px 1px #000"></div>
<div class="a" style="left:281px;top:1129px;width:23px;height:13px;background:#2e2e2e;border:1.5px solid #7a7a7a"></div>
<div class="t" style="left:281px;width:23px;text-align:center;top:1130px;font-size:12.5px;color:#cfcfcf;letter-spacing:-0.5px">9</div>
<div class="a" style="left:311px;top:1029px;width:10px;height:88px;background:#222"></div>
<div class="a" style="left:326px;top:1029px;width:3px;height:94px;background:#555"></div>
<div class="a" style="left:310px;top:1064px;width:12px;height:15px;background:linear-gradient(#fafafa 0,#fafafa 8%,#d8d8d8 14%,#cfcfcf 85%,#a8a8a8 100%);box-shadow:0 1px 1px #000"></div>
<div class="a" style="left:311px;top:1129px;width:23px;height:13px;background:#2e2e2e;border:1.5px solid #7a7a7a"></div>
<div class="t" style="left:311px;width:23px;text-align:center;top:1130px;font-size:12.5px;color:#cfcfcf;letter-spacing:-0.5px">10</div>
<div class="a" style="left:341px;top:1029px;width:10px;height:88px;background:#222"></div>
<div class="a" style="left:356px;top:1029px;width:3px;height:94px;background:#555"></div>
<div class="a" style="left:340px;top:1064px;width:12px;height:15px;background:linear-gradient(#fafafa 0,#fafafa 8%,#d8d8d8 14%,#cfcfcf 85%,#a8a8a8 100%);box-shadow:0 1px 1px #000"></div>
<div class="a" style="left:341px;top:1129px;width:23px;height:13px;background:#2e2e2e;border:1.5px solid #7a7a7a"></div>
<div class="t" style="left:341px;width:23px;text-align:center;top:1130px;font-size:12.5px;color:#cfcfcf;letter-spacing:-0.5px">11</div>
<div class="a" style="left:371px;top:1029px;width:10px;height:88px;background:#222"></div>
<div class="a" style="left:386px;top:1029px;width:3px;height:94px;background:#555"></div>
<div class="a" style="left:370px;top:1064px;width:12px;height:15px;background:linear-gradient(#fafafa 0,#fafafa 8%,#d8d8d8 14%,#cfcfcf 85%,#a8a8a8 100%);box-shadow:0 1px 1px #000"></div>
<div class="a" style="left:371px;top:1129px;width:23px;height:13px;background:#2e2e2e;border:1.5px solid #7a7a7a"></div>
<div class="t" style="left:371px;width:23px;text-align:center;top:1130px;font-size:12.5px;color:#cfcfcf;letter-spacing:-0.5px">12</div>
<div class="a" style="left:401px;top:1029px;width:10px;height:88px;background:#222"></div>
<div class="a" style="left:416px;top:1029px;width:3px;height:94px;background:#555"></div>
<div class="a" style="left:400px;top:1064px;width:12px;height:15px;background:linear-gradient(#fafafa 0,#fafafa 8%,#d8d8d8 14%,#cfcfcf 85%,#a8a8a8 100%);box-shadow:0 1px 1px #000"></div>
<div class="a" style="left:401px;top:1129px;width:23px;height:13px;background:#2e2e2e;border:1.5px solid #7a7a7a"></div>
<div class="t" style="left:401px;width:23px;text-align:center;top:1130px;font-size:12.5px;color:#cfcfcf;letter-spacing:-0.5px">13</div>
<div class="a" style="left:431px;top:1029px;width:10px;height:88px;background:#222"></div>
<div class="a" style="left:446px;top:1029px;width:3px;height:94px;background:#555"></div>
<div class="a" style="left:430px;top:1064px;width:12px;height:15px;background:linear-gradient(#fafafa 0,#fafafa 8%,#d8d8d8 14%,#cfcfcf 85%,#a8a8a8 100%);box-shadow:0 1px 1px #000"></div>
<div class="a" style="left:431px;top:1129px;width:23px;height:13px;background:#2e2e2e;border:1.5px solid #7a7a7a"></div>
<div class="t" style="left:431px;width:23px;text-align:center;top:1130px;font-size:12.5px;color:#cfcfcf;letter-spacing:-0.5px">14</div>
<div class="a" style="left:461px;top:1029px;width:10px;height:88px;background:#222"></div>
<div class="a" style="left:476px;top:1029px;width:3px;height:94px;background:#555"></div>
<div class="a" style="left:460px;top:1064px;width:12px;height:15px;background:linear-gradient(#fafafa 0,#fafafa 8%,#d8d8d8 14%,#cfcfcf 85%,#a8a8a8 100%);box-shadow:0 1px 1px #000"></div>
<div class="a" style="left:461px;top:1129px;width:23px;height:13px;background:#2e2e2e;border:1.5px solid #7a7a7a"></div>
<div class="t" style="left:461px;width:23px;text-align:center;top:1130px;font-size:12.5px;color:#cfcfcf;letter-spacing:-0.5px">15</div>
<div class="a" style="left:491px;top:1029px;width:10px;height:88px;background:#222"></div>
<div class="a" style="left:506px;top:1029px;width:3px;height:94px;background:#555"></div>
<div class="a" style="left:490px;top:1064px;width:12px;height:15px;background:linear-gradient(#fafafa 0,#fafafa 8%,#d8d8d8 14%,#cfcfcf 85%,#a8a8a8 100%);box-shadow:0 1px 1px #000"></div>
<div class="a" style="left:491px;top:1129px;width:23px;height:13px;background:#2e2e2e;border:1.5px solid #7a7a7a"></div>
<div class="t" style="left:491px;width:23px;text-align:center;top:1130px;font-size:12.5px;color:#cfcfcf;letter-spacing:-0.5px">16</div>
<div class="a" style="left:1123px;top:1029px;width:10px;height:88px;background:#222"></div>
<div class="a" style="left:1138px;top:1029px;width:3px;height:94px;background:#555"></div>
<div class="a" style="left:1122px;top:1049px;width:12px;height:15px;background:linear-gradient(#fafafa 0,#fafafa 8%,#d8d8d8 14%,#cfcfcf 85%,#a8a8a8 100%);box-shadow:0 1px 1px #000"></div>
<div class="a" style="left:1123px;top:1129px;width:23px;height:13px;background:#2e2e2e;border:1.5px solid #7a7a7a"></div>
<div class="t" style="left:1123px;width:23px;text-align:center;top:1130px;font-size:12.5px;color:#cfcfcf;letter-spacing:-0.5px">1</div>
<div class="a" style="left:1153px;top:1029px;width:10px;height:88px;background:#222"></div>
<div class="a" style="left:1168px;top:1029px;width:3px;height:94px;background:#555"></div>
<div class="a" style="left:1152px;top:1050px;width:12px;height:15px;background:linear-gradient(#fafafa 0,#fafafa 8%,#d8d8d8 14%,#cfcfcf 85%,#a8a8a8 100%);box-shadow:0 1px 1px #000"></div>
<div class="a" style="left:1152px;top:1058px;width:12px;height:1px;background:#c02828"></div>
<div class="a" style="left:1153px;top:1129px;width:23px;height:13px;background:#2e2e2e;border:1.5px solid #7a7a7a"></div>
<div class="t" style="left:1153px;width:23px;text-align:center;top:1130px;font-size:12.5px;color:#cfcfcf;letter-spacing:-0.5px">2</div>
<div class="a" style="left:1183px;top:1029px;width:10px;height:88px;background:#222"></div>
<div class="a" style="left:1198px;top:1029px;width:3px;height:94px;background:#555"></div>
<div class="a" style="left:1182px;top:1050px;width:12px;height:15px;background:linear-gradient(#fafafa 0,#fafafa 8%,#d8d8d8 14%,#cfcfcf 85%,#a8a8a8 100%);box-shadow:0 1px 1px #000"></div>
<div class="a" style="left:1182px;top:1058px;width:12px;height:1px;background:#c02828"></div>
<div class="a" style="left:1183px;top:1129px;width:23px;height:13px;background:#2e2e2e;border:1.5px solid #7a7a7a"></div>
<div class="t" style="left:1183px;width:23px;text-align:center;top:1130px;font-size:12.5px;color:#cfcfcf;letter-spacing:-0.5px">3</div>
<div class="a" style="left:1213px;top:1029px;width:10px;height:88px;background:#222"></div>
<div class="a" style="left:1228px;top:1029px;width:3px;height:94px;background:#555"></div>
<div class="a" style="left:1212px;top:1050px;width:12px;height:15px;background:linear-gradient(#fafafa 0,#fafafa 8%,#d8d8d8 14%,#cfcfcf 85%,#a8a8a8 100%);box-shadow:0 1px 1px #000"></div>
<div class="a" style="left:1212px;top:1058px;width:12px;height:1px;background:#c02828"></div>
<div class="a" style="left:1213px;top:1129px;width:23px;height:13px;background:#2e2e2e;border:1.5px solid #7a7a7a"></div>
<div class="t" style="left:1213px;width:23px;text-align:center;top:1130px;font-size:12.5px;color:#cfcfcf;letter-spacing:-0.5px">4</div>
<div class="a" style="left:1243px;top:1029px;width:10px;height:88px;background:#222"></div>
<div class="a" style="left:1258px;top:1029px;width:3px;height:94px;background:#555"></div>
<div class="a" style="left:1242px;top:1050px;width:12px;height:15px;background:linear-gradient(#fafafa 0,#fafafa 8%,#d8d8d8 14%,#cfcfcf 85%,#a8a8a8 100%);box-shadow:0 1px 1px #000"></div>
<div class="a" style="left:1242px;top:1058px;width:12px;height:1px;background:#c02828"></div>
<div class="a" style="left:1243px;top:1129px;width:23px;height:13px;background:#2e2e2e;border:1.5px solid #7a7a7a"></div>
<div class="t" style="left:1243px;width:23px;text-align:center;top:1130px;font-size:12.5px;color:#cfcfcf;letter-spacing:-0.5px">5</div>
<div class="a" style="left:1273px;top:1029px;width:10px;height:88px;background:#222"></div>
<div class="a" style="left:1288px;top:1029px;width:3px;height:94px;background:#555"></div>
<div class="a" style="left:1272px;top:1050px;width:12px;height:15px;background:linear-gradient(#fafafa 0,#fafafa 8%,#d8d8d8 14%,#cfcfcf 85%,#a8a8a8 100%);box-shadow:0 1px 1px #000"></div>
<div class="a" style="left:1272px;top:1058px;width:12px;height:1px;background:#c02828"></div>
<div class="a" style="left:1273px;top:1129px;width:23px;height:13px;background:#2e2e2e;border:1.5px solid #7a7a7a"></div>
<div class="t" style="left:1273px;width:23px;text-align:center;top:1130px;font-size:12.5px;color:#cfcfcf;letter-spacing:-0.5px">6</div>
<div class="a" style="left:1303px;top:1029px;width:10px;height:88px;background:#222"></div>
<div class="a" style="left:1318px;top:1029px;width:3px;height:94px;background:#555"></div>
<div class="a" style="left:1302px;top:1050px;width:12px;height:15px;background:linear-gradient(#fafafa 0,#fafafa 8%,#d8d8d8 14%,#cfcfcf 85%,#a8a8a8 100%);box-shadow:0 1px 1px #000"></div>
<div class="a" style="left:1302px;top:1058px;width:12px;height:1px;background:#c02828"></div>
<div class="a" style="left:1303px;top:1129px;width:23px;height:13px;background:#2e2e2e;border:1.5px solid #7a7a7a"></div>
<div class="t" style="left:1303px;width:23px;text-align:center;top:1130px;font-size:12.5px;color:#cfcfcf;letter-spacing:-0.5px">7</div>
<div class="a" style="left:1333px;top:1029px;width:10px;height:88px;background:#222"></div>
<div class="a" style="left:1348px;top:1029px;width:3px;height:94px;background:#555"></div>
<div class="a" style="left:1332px;top:1050px;width:12px;height:15px;background:linear-gradient(#fafafa 0,#fafafa 8%,#d8d8d8 14%,#cfcfcf 85%,#a8a8a8 100%);box-shadow:0 1px 1px #000"></div>
<div class="a" style="left:1332px;top:1058px;width:12px;height:1px;background:#c02828"></div>
<div class="a" style="left:1333px;top:1129px;width:23px;height:13px;background:#2e2e2e;border:1.5px solid #7a7a7a"></div>
<div class="t" style="left:1333px;width:23px;text-align:center;top:1130px;font-size:12.5px;color:#cfcfcf;letter-spacing:-0.5px">8</div>
<div class="a" style="left:1363px;top:1029px;width:10px;height:88px;background:#222"></div>
<div class="a" style="left:1378px;top:1029px;width:3px;height:94px;background:#555"></div>
<div class="a" style="left:1362px;top:1050px;width:12px;height:15px;background:linear-gradient(#fafafa 0,#fafafa 8%,#d8d8d8 14%,#cfcfcf 85%,#a8a8a8 100%);box-shadow:0 1px 1px #000"></div>
<div class="a" style="left:1362px;top:1058px;width:12px;height:1px;background:#c02828"></div>
<div class="a" style="left:1363px;top:1129px;width:23px;height:13px;background:#2e2e2e;border:1.5px solid #7a7a7a"></div>
<div class="t" style="left:1363px;width:23px;text-align:center;top:1130px;font-size:12.5px;color:#cfcfcf;letter-spacing:-0.5px">9</div>
<div class="a" style="left:1393px;top:1029px;width:10px;height:88px;background:#222"></div>
<div class="a" style="left:1408px;top:1029px;width:3px;height:94px;background:#555"></div>
<div class="a" style="left:1392px;top:1050px;width:12px;height:15px;background:linear-gradient(#fafafa 0,#fafafa 8%,#d8d8d8 14%,#cfcfcf 85%,#a8a8a8 100%);box-shadow:0 1px 1px #000"></div>
<div class="a" style="left:1392px;top:1058px;width:12px;height:1px;background:#c02828"></div>
<div class="a" style="left:1393px;top:1129px;width:23px;height:13px;background:#2e2e2e;border:1.5px solid #7a7a7a"></div>
<div class="t" style="left:1393px;width:23px;text-align:center;top:1130px;font-size:12.5px;color:#cfcfcf;letter-spacing:-0.5px">10</div>
<div class="a" style="left:1423px;top:1029px;width:10px;height:88px;background:#222"></div>
<div class="a" style="left:1438px;top:1029px;width:3px;height:94px;background:#555"></div>
<div class="a" style="left:1422px;top:1050px;width:12px;height:15px;background:linear-gradient(#fafafa 0,#fafafa 8%,#d8d8d8 14%,#cfcfcf 85%,#a8a8a8 100%);box-shadow:0 1px 1px #000"></div>
<div class="a" style="left:1422px;top:1058px;width:12px;height:1px;background:#c02828"></div>
<div class="a" style="left:1423px;top:1129px;width:23px;height:13px;background:#2e2e2e;border:1.5px solid #7a7a7a"></div>
<div class="t" style="left:1423px;width:23px;text-align:center;top:1130px;font-size:12.5px;color:#cfcfcf;letter-spacing:-0.5px">11</div>
<div class="a" style="left:1453px;top:1029px;width:10px;height:88px;background:#222"></div>
<div class="a" style="left:1468px;top:1029px;width:3px;height:94px;background:#555"></div>
<div class="a" style="left:1452px;top:1050px;width:12px;height:15px;background:linear-gradient(#fafafa 0,#fafafa 8%,#d8d8d8 14%,#cfcfcf 85%,#a8a8a8 100%);box-shadow:0 1px 1px #000"></div>
<div class="a" style="left:1452px;top:1058px;width:12px;height:1px;background:#c02828"></div>
<div class="a" style="left:1453px;top:1129px;width:23px;height:13px;background:#2e2e2e;border:1.5px solid #7a7a7a"></div>
<div class="t" style="left:1453px;width:23px;text-align:center;top:1130px;font-size:12.5px;color:#cfcfcf;letter-spacing:-0.5px">12</div>
<div class="a" style="left:1483px;top:1029px;width:10px;height:88px;background:#222"></div>
<div class="a" style="left:1498px;top:1029px;width:3px;height:94px;background:#555"></div>
<div class="a" style="left:1482px;top:1050px;width:12px;height:15px;background:linear-gradient(#fafafa 0,#fafafa 8%,#d8d8d8 14%,#cfcfcf 85%,#a8a8a8 100%);box-shadow:0 1px 1px #000"></div>
<div class="a" style="left:1482px;top:1058px;width:12px;height:1px;background:#c02828"></div>
<div class="a" style="left:1483px;top:1129px;width:23px;height:13px;background:#2e2e2e;border:1.5px solid #7a7a7a"></div>
<div class="t" style="left:1483px;width:23px;text-align:center;top:1130px;font-size:12.5px;color:#cfcfcf;letter-spacing:-0.5px">13</div>
<div class="a" style="left:1513px;top:1029px;width:10px;height:88px;background:#222"></div>
<div class="a" style="left:1528px;top:1029px;width:3px;height:94px;background:#555"></div>
<div class="a" style="left:1512px;top:1050px;width:12px;height:15px;background:linear-gradient(#fafafa 0,#fafafa 8%,#d8d8d8 14%,#cfcfcf 85%,#a8a8a8 100%);box-shadow:0 1px 1px #000"></div>
<div class="a" style="left:1512px;top:1058px;width:12px;height:1px;background:#c02828"></div>
<div class="a" style="left:1513px;top:1129px;width:23px;height:13px;background:#2e2e2e;border:1.5px solid #7a7a7a"></div>
<div class="t" style="left:1513px;width:23px;text-align:center;top:1130px;font-size:12.5px;color:#cfcfcf;letter-spacing:-0.5px">14</div>
<div class="a" style="left:1543px;top:1029px;width:10px;height:88px;background:#222"></div>
<div class="a" style="left:1558px;top:1029px;width:3px;height:94px;background:#555"></div>
<div class="a" style="left:1542px;top:1099px;width:12px;height:15px;background:linear-gradient(#fafafa 0,#fafafa 8%,#d8d8d8 14%,#cfcfcf 85%,#a8a8a8 100%);box-shadow:0 1px 1px #000"></div>
<div class="a" style="left:1543px;top:1129px;width:23px;height:13px;background:#2e2e2e;border:1.5px solid #7a7a7a"></div>
<div class="t" style="left:1543px;width:23px;text-align:center;top:1130px;font-size:12.5px;color:#cfcfcf;letter-spacing:-0.5px">15</div>
<div class="a" style="left:1573px;top:1029px;width:10px;height:88px;background:#222"></div>
<div class="a" style="left:1588px;top:1029px;width:3px;height:94px;background:#555"></div>
<div class="a" style="left:1572px;top:1099px;width:12px;height:15px;background:linear-gradient(#fafafa 0,#fafafa 8%,#d8d8d8 14%,#cfcfcf 85%,#a8a8a8 100%);box-shadow:0 1px 1px #000"></div>
<div class="a" style="left:1573px;top:1129px;width:23px;height:13px;background:#2e2e2e;border:1.5px solid #7a7a7a"></div>
<div class="t" style="left:1573px;width:23px;text-align:center;top:1130px;font-size:12.5px;color:#cfcfcf;letter-spacing:-0.5px">16</div>
<div class="a" style="left:13px;top:1052px;width:15px;height:49px;background:#2e2e2e;border:2px solid #7a7a7a"></div>
<div class="t" style="left:18px;top:1066px;font-size:10px;color:#dcdcdc;">I</div>
<div class="t" style="left:16px;top:1077px;font-size:10px;color:#dcdcdc;">N</div>
<div class="a" style="left:1607px;top:1051px;width:15px;height:50px;background:#2e2e2e;border:2px solid #7a7a7a"></div>
<div class="t" style="left:1610px;top:1061px;font-size:10px;color:#dcdcdc;">O</div>
<div class="t" style="left:1610px;top:1072px;font-size:10px;color:#dcdcdc;">U</div>
<div class="t" style="left:1610px;top:1083px;font-size:10px;color:#dcdcdc;">T</div>
<div class="a" style="left:527px;top:1044px;width:24px;height:24px;background:#3a3a3a;border-radius:50%"></div>
<svg style="left:527px;top:1084px" width="24" height="24"><circle cx="12" cy="12" r="10.5" fill="#4a4a4a" stroke="#6e6e6e" stroke-width="2"/><path d="M9 6 L17 12 L9 18Z" fill="#7a7a7a"/></svg>
<div class="a" style="left:1083px;top:1044px;width:24px;height:24px;background:#3a3a3a;border-radius:50%"></div>
<svg style="left:1083px;top:1084px" width="24" height="24"><circle cx="12" cy="12" r="10.5" fill="#4a4a4a" stroke="#6e6e6e" stroke-width="2"/><path d="M9 6 L17 12 L9 18Z" fill="#7a7a7a"/></svg>
</body></html>
